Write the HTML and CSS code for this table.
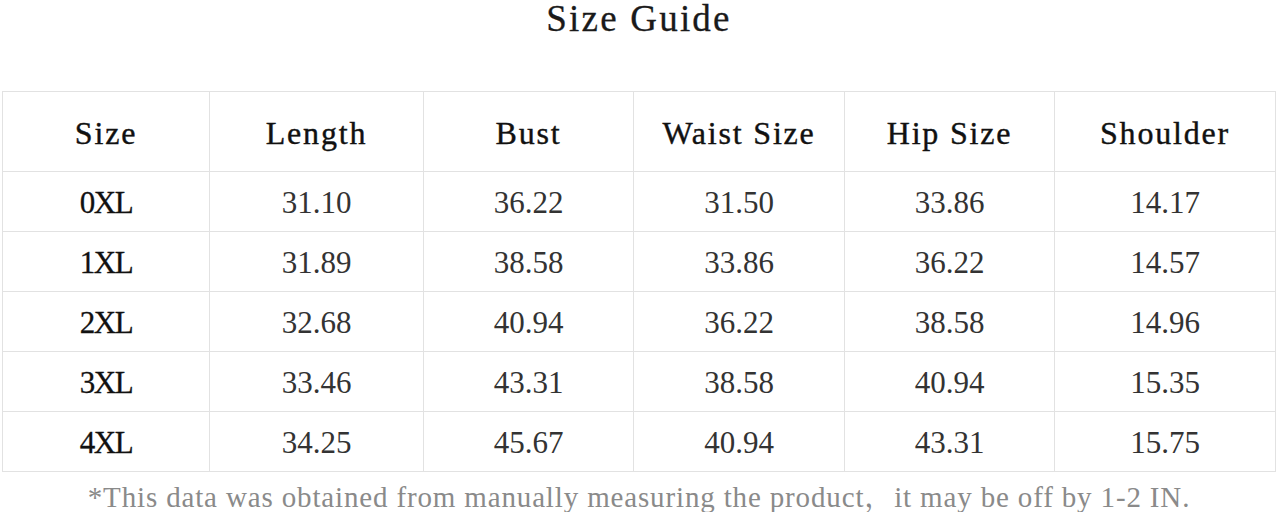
FILE: index.html
```html
<!DOCTYPE html>
<html lang="en">
<head>
<meta charset="utf-8">
<title>Size Guide</title>
<link rel="stylesheet" href="styles.css">
</head>
<body>
<h1 class="title">Size Guide</h1>
<div class="size-table">
  <div class="cell head">Size</div>
  <div class="cell head">Length</div>
  <div class="cell head">Bust</div>
  <div class="cell head">Waist Size</div>
  <div class="cell head">Hip Size</div>
  <div class="cell head">Shoulder</div>

  <div class="cell label">0XL</div>
  <div class="cell">31.10</div>
  <div class="cell">36.22</div>
  <div class="cell">31.50</div>
  <div class="cell">33.86</div>
  <div class="cell">14.17</div>

  <div class="cell label">1XL</div>
  <div class="cell">31.89</div>
  <div class="cell">38.58</div>
  <div class="cell">33.86</div>
  <div class="cell">36.22</div>
  <div class="cell">14.57</div>

  <div class="cell label">2XL</div>
  <div class="cell">32.68</div>
  <div class="cell">40.94</div>
  <div class="cell">36.22</div>
  <div class="cell">38.58</div>
  <div class="cell">14.96</div>

  <div class="cell label">3XL</div>
  <div class="cell">33.46</div>
  <div class="cell">43.31</div>
  <div class="cell">38.58</div>
  <div class="cell">40.94</div>
  <div class="cell">15.35</div>

  <div class="cell label">4XL</div>
  <div class="cell">34.25</div>
  <div class="cell">45.67</div>
  <div class="cell">40.94</div>
  <div class="cell">43.31</div>
  <div class="cell">15.75</div>
</div>
<p class="note">*This data was obtained from manually measuring the product，it may be off by 1-2 IN.</p>
</body>
</html>
```
FILE: styles.css
```css
html, body {
  margin: 0;
  padding: 0;
  background: #ffffff;
}

body {
  font-family: "Liberation Serif", "Noto Serif CJK SC", serif;
  color: #222;
  overflow: hidden;
}

.title {
  margin: 0 0 57px 0;
  height: 34px;
  font-size: 37px;
  line-height: 37px;
  font-weight: normal;
  text-align: center;
  letter-spacing: 2.2px;
  color: #1a1a1a;
  -webkit-text-stroke: 0.3px #1a1a1a;
}

.size-table {
  margin-left: 2px;
  width: 1274px;
  box-sizing: border-box;
  display: grid;
  grid-template-columns: 207px 214px 210px 211px 210px 221px;
  grid-template-rows: 80px repeat(5, 60px);
  border-top: 1px solid #e2e2e2;
  border-left: 1px solid #e2e2e2;
}

.cell {
  box-sizing: border-box;
  display: flex;
  align-items: center;
  justify-content: center;
  padding-top: 3px;
  border-right: 1px solid #e2e2e2;
  border-bottom: 1px solid #e2e2e2;
  font-size: 31px;
  color: #333;
  white-space: nowrap;
}

.head {
  font-size: 32px;
  letter-spacing: 1.8px;
  color: #111;
  -webkit-text-stroke: 0.4px #111;
}

.label {
  color: #111;
  letter-spacing: -1.5px;
  -webkit-text-stroke: 0.3px #111;
}

.note {
  margin: 10px 0 0 0;
  font-size: 29px;
  line-height: 30px;
  text-align: center;
  letter-spacing: 0.85px;
  color: #8a8a8a;
  white-space: nowrap;
}
```
